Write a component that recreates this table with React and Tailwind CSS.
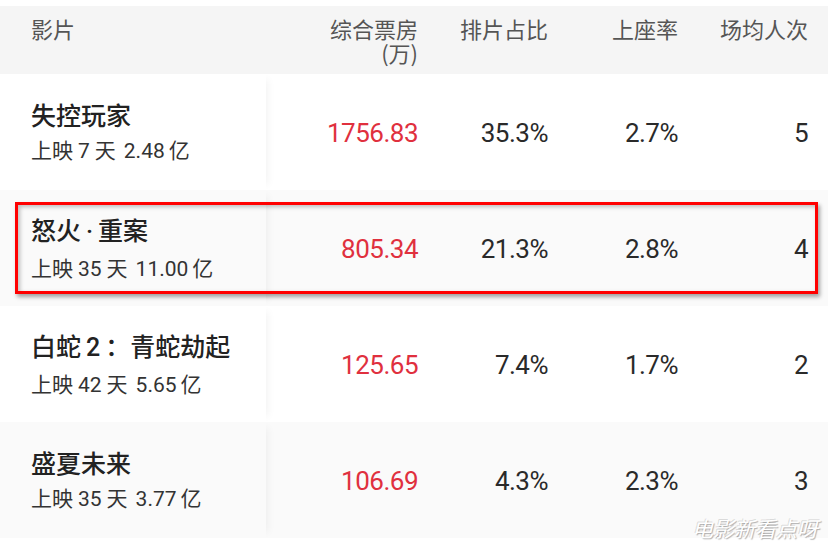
import React from "react";

const films = [
  { name: ["失控玩家"], days: "7", total: "2.48", box: "1756.83", share: "35.3%", seat: "2.7%", avg: "5" },
  { name: ["怒火", "·", "重案"], days: "35", total: "11.00", box: "805.34", share: "21.3%", seat: "2.8%", avg: "4", marked: true },
  { name: ["白蛇", "2", "：青蛇劫起"], days: "42", total: "5.65", box: "125.65", share: "7.4%", seat: "1.7%", avg: "2" },
  { name: ["盛夏未来"], days: "35", total: "3.77", box: "106.69", share: "4.3%", seat: "2.3%", avg: "3" },
];

const cjk = { fontFamily: '"Noto Sans CJK SC", "Noto Sans", sans-serif' };
const num = { fontFamily: 'Roboto, "Noto Sans CJK SC", sans-serif' };

function Name({ parts }) {
  if (parts.length === 1) return parts[0];
  return (
    <>
      {parts[0]}
      <span className="mx-[5px]" style={num}>{parts[1]}</span>
      {parts[2]}
    </>
  );
}

export default function App() {
  return (
    <div className="relative w-[828px] h-[552px] bg-white overflow-hidden text-[#222]" style={cjk}>
      <div className="h-[6px]" />
      <div className="flex h-[68px] bg-[#f5f5f5] text-[22px] leading-[24px] text-[#555]">
        <div className="w-[266px] pl-[31px] pt-[10px]">影片</div>
        <div className="w-[152px] pt-[10px] text-right">
          <div>综合票房</div>
          <div>(万)</div>
        </div>
        <div className="w-[130px] pt-[10px] text-right">排片占比</div>
        <div className="w-[130px] pt-[10px] text-right">上座率</div>
        <div className="w-[130px] pt-[10px] text-right">场均人次</div>
      </div>

      {films.map((f, i) => (
        <div
          key={i}
          className={`relative flex h-[116px] items-center ${i % 2 === 1 ? "bg-[#fafafa]" : "bg-white"}`}
        >
          <div className="relative z-10 flex h-full w-[266px] flex-col justify-center pl-[31px] shadow-[8px_0_8px_-6px_rgba(0,0,0,0.05)]">
            <div className="-mt-[2px] text-[25px] leading-[32px] font-medium text-[#222]">
              <Name parts={f.name} />
            </div>
            <div className="mt-[6px] text-[21px] leading-[26px] text-[#333]">
              上映<span className="mx-[5px]" style={num}>{f.days}</span>天<span className="ml-[8px] mr-[4px]" style={num}>{f.total}</span>亿
            </div>
          </div>
          <div className="w-[152px] pt-[2px] text-right text-[26px] tracking-[-0.5px] text-[#e0303e]" style={num}>
            {f.box}
          </div>
          <div className="w-[130px] pt-[2px] text-right text-[26px] tracking-[-0.5px] text-[#2a2a2a]" style={num}>
            {f.share}
          </div>
          <div className="w-[130px] pt-[2px] text-right text-[26px] tracking-[-0.5px] text-[#2a2a2a]" style={num}>
            {f.seat}
          </div>
          <div className="w-[130px] pt-[2px] text-right text-[26px] tracking-[-0.5px] text-[#2a2a2a]" style={num}>
            {f.avg}
          </div>
          {f.marked && (
            <div className="absolute left-[15px] top-[12px] z-20 h-[92px] w-[803px] border-[3px] border-[#ff0000] shadow-[2px_3px_4px_rgba(0,0,0,0.35),inset_2px_2px_4px_rgba(0,0,0,0.25)]" />
          )}
        </div>
      ))}

      <div
        className="absolute right-[10px] bottom-[12px] z-20 text-[21px] leading-[24px] italic text-white"
        style={{ ...cjk, textShadow: "1px 1px 1px rgba(0,0,0,0.3), -1px -1px 0 rgba(0,0,0,0.12)" }}
      >
        电影新看点呀
      </div>
    </div>
  );
}
